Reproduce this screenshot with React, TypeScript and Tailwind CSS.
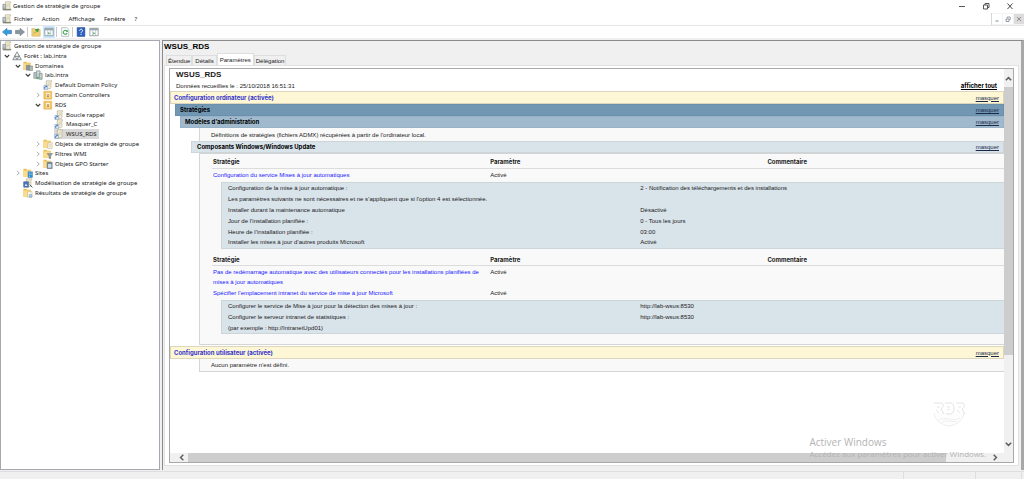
import type { ReactNode } from "react";

type IconName =
  | "console"
  | "forest"
  | "domains"
  | "domain"
  | "gpo"
  | "ou"
  | "folder"
  | "filter"
  | "starter"
  | "sites"
  | "modeling"
  | "results";

function Folder({ children }: { children?: ReactNode }) {
  return (
    <>
      <path d="M0.5 1 H4 L5 2 H9.5 V10.5 H0.5 Z" fill="#e9bf5a" />
      <path d="M0.5 3 H9.5 V10.5 H0.5 Z" fill="#fbdc8c" />
      {children}
    </>
  );
}

function Scroll() {
  return (
    <>
      <path d="M4 1 H10.5 L9.5 3 V9 L8.5 10.5 H3 L4 8.5 Z" fill="#f7f2d8" stroke="#a9a184" strokeWidth="0.7" />
      <path d="M5.5 3.5 H8.5 M5.5 5.2 H8.5 M5.5 6.9 H8" stroke="#b9b08e" strokeWidth="0.6" />
    </>
  );
}

function Icon({ name }: { name: IconName }) {
  return (
    <svg viewBox="0 0 12 12" className="size-[10px] shrink-0" aria-hidden="true">
      {name === "console" && (
        <>
          <Scroll />
          <path d="M1 4 H4.5 V10 H1 Z" fill="#a9b2b6" stroke="#7b858a" strokeWidth="0.6" />
          <path d="M1.8 5.5 H4 M1.8 7 H4" stroke="#e4eaec" strokeWidth="0.6" />
          <path d="M1 9.4 H11 V11.2 H1 Z" fill="#85887a" />
        </>
      )}
      {name === "forest" && (
        <>
          <path d="M6 1 L9 6.5 H3 Z" fill="#f4f6f6" stroke="#6b7679" strokeWidth="0.9" />
          <path d="M3.5 5.5 L6 10.5 H1 Z" fill="#e3e8e9" stroke="#6b7679" strokeWidth="0.9" />
          <path d="M8.5 5.5 L11.2 10.5 H6 Z" fill="#e3e8e9" stroke="#6b7679" strokeWidth="0.9" />
        </>
      )}
      {name === "domains" && (
        <Folder>
          <path d="M4 5 H8 V11 H4 Z" fill="#8b979c" stroke="#5f6a6e" strokeWidth="0.5" />
          <path d="M7.5 6 H11.5 V11.5 H7.5 Z" fill="#aeb8bb" stroke="#5f6a6e" strokeWidth="0.5" />
        </Folder>
      )}
      {name === "domain" && (
        <>
          <path d="M4 1 H8.5 V9 H4 Z" fill="#c9d1d3" stroke="#7c898d" strokeWidth="0.7" />
          <path d="M1 3 H4.5 V10 H1 Z" fill="#b4bfc2" stroke="#7c898d" strokeWidth="0.7" />
          <path d="M7.5 4 H11 V11.2 H7.5 Z" fill="#b5c3bd" stroke="#6d8a7a" strokeWidth="0.7" />
          <path d="M5 3 H7.5 M5 5 H7 M8.3 6 H10.2 M8.3 8 H10.2" stroke="#eef2f2" strokeWidth="0.6" />
          <path d="M4 8.5 H7 V11 H4 Z" fill="#6da27f" />
        </>
      )}
      {name === "gpo" && (
        <>
          <Scroll />
          <path d="M1 6.5 H5.5 V11.5 H1 Z" fill="#dbe6f6" stroke="#7b93b8" strokeWidth="0.6" />
          <path d="M2 10.5 V9 C2 8 3 7.8 4 7.8 M3.3 7 L4.4 7.8 L3.3 8.8" fill="none" stroke="#1f55b5" strokeWidth="0.9" />
        </>
      )}
      {name === "ou" && (
        <>
          <path d="M1 1.5 H10.5 V11 H1 Z" fill="#f3c460" stroke="#d8a850" strokeWidth="0.6" />
          <path d="M3.5 3.5 H8.5 V9 H3.5 Z" fill="#fff5d8" />
          <path d="M4.5 5 H7.5 V8.5 H4.5 Z" fill="#b8924a" />
          <path d="M5.3 5.6 H6.7 V6.6 H5.3 Z" fill="#fff" />
        </>
      )}
      {name === "folder" && (
        <Folder>
          <path d="M6 4.5 H11 V11.3 H5.5 Z" fill="#f9f6e6" stroke="#b9ab7c" strokeWidth="0.6" />
          <path d="M7 7 H9.8 M7 8.6 H9.8" stroke="#b9b08e" strokeWidth="0.6" />
        </Folder>
      )}
      {name === "filter" && (
        <Folder>
          <path d="M5 5.5 H11.5 L9.2 8.3 V11.5 H7.4 V8.3 Z" fill="#93a3ac" stroke="#5e7079" strokeWidth="0.6" />
        </Folder>
      )}
      {name === "starter" && (
        <Folder>
          <path d="M5 4 H11 V11.5 H5 Z" fill="#6f8da4" stroke="#4c667b" strokeWidth="0.6" />
          <path d="M6 6 H10 V10.5 H6 Z" fill="#cddde6" />
        </Folder>
      )}
      {name === "sites" && (
        <Folder>
          <path d="M6 4.5 H11.3 V11.4 H6 Z" fill="#2f8fd0" stroke="#1e6aa5" strokeWidth="0.5" />
          <path d="M7 6 H8.2 M9.2 6 H10.4 M7 8 H8.2 M9.2 8 H10.4 M7 10 H8.2" stroke="#d8eefb" strokeWidth="0.9" />
        </Folder>
      )}
      {name === "modeling" && (
        <>
          <Scroll />
          <path d="M0.8 4.5 H6.5 V11 H0.8 Z" fill="#4c74b8" stroke="#2f4f8c" strokeWidth="0.6" />
          <path d="M2 9.5 L3.5 6.5 L5.3 9.5 Z" fill="#e8eefb" />
          <path d="M8 8 L11.3 11.3" stroke="#44607f" strokeWidth="1.2" />
        </>
      )}
      {name === "results" && (
        <Folder>
          <path d="M5.5 4.5 H10.8 V11.3 H5.5 Z" fill="#fffdf3" stroke="#b9ab7c" strokeWidth="0.6" />
          <circle cx="9" cy="9.2" r="1.8" fill="#a9d2ee" stroke="#5c8fb5" strokeWidth="0.6" />
        </Folder>
      )}
    </svg>
  );
}

type Node = { label: string; icon: IconName; pad: string; open?: boolean; leaf?: boolean; selected?: boolean };

const tree: Node[] = [
  { label: "Forêt : lab.intra", icon: "forest", pad: "pl-px", open: true },
  { label: "Domaines", icon: "domains", pad: "pl-[12px]", open: true },
  { label: "lab.intra", icon: "domain", pad: "pl-[22px]", open: true },
  { label: "Default Domain Policy", icon: "gpo", pad: "pl-[32px]", leaf: true },
  { label: "Domain Controllers", icon: "ou", pad: "pl-[32px]" },
  { label: "RDS", icon: "ou", pad: "pl-[32px]", open: true },
  { label: "Boucle rappel", icon: "gpo", pad: "pl-[43px]", leaf: true },
  { label: "Masquer_C", icon: "gpo", pad: "pl-[43px]", leaf: true },
  { label: "WSUS_RDS", icon: "gpo", pad: "pl-[43px]", leaf: true, selected: true },
  { label: "Objets de stratégie de groupe", icon: "folder", pad: "pl-[32px]" },
  { label: "Filtres WMI", icon: "filter", pad: "pl-[32px]" },
  { label: "Objets GPO Starter", icon: "starter", pad: "pl-[32px]" },
  { label: "Sites", icon: "sites", pad: "pl-[12px]" },
  { label: "Modélisation de stratégie de groupe", icon: "modeling", pad: "pl-[12px]", leaf: true },
  { label: "Résultats de stratégie de groupe", icon: "results", pad: "pl-[12px]", leaf: true },
];

function Chevron({ open }: { open?: boolean }) {
  return (
    <svg viewBox="0 0 10 10" className="size-[10px]" aria-hidden="true">
      {open ? (
        <path d="M2.8 4 L5 6.2 L7.2 4" fill="none" stroke="#404040" strokeWidth="1.1" />
      ) : (
        <path d="M4 2.8 L6.2 5 L4 7.2" fill="none" stroke="#a0a0a0" strokeWidth="0.9" />
      )}
    </svg>
  );
}

function Tree() {
  return (
    <nav aria-label="Arborescence" className="w-[160px] shrink-0 border border-[#a5a8b0] bg-white">
      <ul className="grid h-[157px] auto-rows-fr whitespace-nowrap">
        <li className="flex items-center gap-[2px] pl-px">
          <Icon name="console" />
          <span>Gestion de stratégie de groupe</span>
        </li>
        {tree.map((n) => (
          <li key={n.label} className={`flex items-center ${n.pad}`}>
            <span className="w-[10px] shrink-0">
              {!n.leaf && (
                <button type="button" aria-label={`Développer ${n.label}`} className="block">
                  <Chevron open={n.open} />
                </button>
              )}
            </span>
            <span className={`flex items-center gap-[2px] self-stretch ${n.selected ? "bg-[#d9d9d9] pr-[2px]" : ""}`}>
              <Icon name={n.icon} />
              {n.label}
            </span>
          </li>
        ))}
      </ul>
    </nav>
  );
}

function ToolIcon({ label, active, children }: { label: string; active?: boolean; children: ReactNode }) {
  return (
    <button
      type="button"
      aria-label={label}
      className={`flex h-[12px] w-[12px] items-center justify-center ${active ? "bg-[#cce8ff]" : ""}`}
    >
      <svg viewBox="0 0 12 12" className="size-[10px]" aria-hidden="true">
        {children}
      </svg>
    </button>
  );
}

function Pane() {
  return (
    <>
      <path d="M1 1.5 H11 V10.5 H1 Z" fill="#fff" stroke="#7d8a93" strokeWidth="0.9" />
      <path d="M1 1.5 H11 V4 H1 Z" fill="#9aa6ae" />
      <path d="M4.5 4 V10.5 M8 4 V10.5" stroke="#9aa6ae" strokeWidth="0.7" />
      <path d="M5.2 6 L7.4 7.5 L5.2 9 Z" fill="#3fa257" />
    </>
  );
}

function Divider() {
  return <span className="mr-px h-[10px] w-px bg-[#c9c9c9]" />;
}

function Chrome() {
  return (
    <header className="shrink-0 bg-white">
      <div className="flex h-[12px] items-center justify-between pr-[9px] pl-[2px]">
        <h1 className="flex items-center gap-px">
          <Icon name="console" />
          Gestion de stratégie de groupe
        </h1>
        <div className="flex gap-[14px]">
          <button type="button" aria-label="Réduire">
            <svg viewBox="0 0 10 10" className="size-[10px]"><path d="M2 5.5 H8" stroke="#444" strokeWidth="0.9" /></svg>
          </button>
          <button type="button" aria-label="Restaurer">
            <svg viewBox="0 0 10 10" className="size-[10px]">
              <path d="M2.5 4 H6.5 V8 H2.5 Z M4 4 V2.5 H8 V6.5 H6.5" fill="none" stroke="#444" strokeWidth="0.9" />
            </svg>
          </button>
          <button type="button" aria-label="Fermer">
            <svg viewBox="0 0 10 10" className="size-[10px]"><path d="M2.5 2.5 L7.5 8 M7.5 2.5 L2.5 8" stroke="#333" strokeWidth="0.9" /></svg>
          </button>
        </div>
      </div>
      <div className="flex h-[13px] items-center justify-between pl-[2px]">
        <div className="flex items-center gap-[9px]">
          <button type="button" className="flex items-center gap-[2px]">
            <Icon name="console" />
            Fichier
          </button>
          <button type="button">Action</button>
          <button type="button">Affichage</button>
          <button type="button">Fenêtre</button>
          <button type="button">?</button>
        </div>
        <div className="flex h-[12px] items-center gap-[1px] border-l border-[#d8d8d8] bg-[#f3f3f3]">
          <button type="button" aria-label="Réduire la fenêtre" className="bg-white">
            <svg viewBox="0 0 10 10" className="size-[10px]"><path d="M3.5 7 H6.5" stroke="#7c8594" /></svg>
          </button>
          <button type="button" aria-label="Restaurer la fenêtre" className="bg-white">
            <svg viewBox="0 0 10 10" className="size-[10px]">
              <path d="M3 5 H6 V7.5 H3 Z M4.2 4.5 V3 H7.2 V5.6 H6.2" fill="none" stroke="#7c8594" strokeWidth="0.8" />
            </svg>
          </button>
          <button type="button" aria-label="Fermer la fenêtre" className="bg-[#dcdcdc]">
            <svg viewBox="0 0 10 10" className="size-[10px]"><path d="M3 3 L7 7 M7 3 L3 7" stroke="#8f8f8f" /></svg>
          </button>
        </div>
      </div>
      <div className="flex h-[13px] items-center gap-px border-t border-[#e6e6e6] pl-[1px]">
        <ToolIcon label="Précédent">
          <path d="M0.5 6 L6 1.5 V4 H11.5 V8 H6 V10.5 Z" fill="#3d9bdc" stroke="#2276b8" strokeWidth="0.6" />
        </ToolIcon>
        <ToolIcon label="Suivant">
          <path d="M11.5 6 L6 1.5 V4 H0.5 V8 H6 V10.5 Z" fill="#8a969e" stroke="#6d7980" strokeWidth="0.6" />
        </ToolIcon>
        <Divider />
        <ToolIcon label="Dossier parent">
          <path d="M1 2 H5 L6 3 H11 V11 H1 Z" fill="#f3cf74" stroke="#c9a85a" strokeWidth="0.6" />
          <path d="M3.5 8 L6.5 5 M5 3.2 L9 2.2 L8.2 6 Z" fill="#2f9a43" stroke="#2f9a43" strokeWidth="0.8" />
        </ToolIcon>
        <ToolIcon label="Afficher l’arborescence" active>
          <Pane />
        </ToolIcon>
        <Divider />
        <ToolIcon label="Actualiser">
          <path d="M2 0.8 H8.5 L10.5 2.8 V11.2 H2 Z" fill="#fff" stroke="#9aa3a8" strokeWidth="0.8" />
          <path d="M8.2 4.8 A2.4 2.4 0 1 0 8.6 7.2" fill="none" stroke="#3ba94f" strokeWidth="1.3" />
          <path d="M9.4 3.4 V6 H6.8 Z" fill="#3ba94f" />
        </ToolIcon>
        <Divider />
        <ToolIcon label="Aide">
          <path d="M1.5 0.8 H10.5 V11.2 H1.5 Z" fill="#2d62c4" stroke="#173f8d" strokeWidth="0.8" />
          <path d="M4.4 4.4 C4.4 2 8 2.2 7.8 4.4 C7.7 5.6 6.1 5.8 6.1 7.4 M6.1 8.4 V9.6" fill="none" stroke="#fff" strokeWidth="1.2" />
        </ToolIcon>
        <ToolIcon label="Volet Actions">
          <Pane />
        </ToolIcon>
      </div>
    </header>
  );
}

function Toggle() {
  return (
    <a href="#masquer" className="font-['Liberation_Sans',sans-serif] font-normal text-[#1c2a4a] underline">
      masquer
    </a>
  );
}

const bar = "flex items-center justify-between border pr-[4px] font-['Inter',sans-serif] font-bold";
const head = "border-b border-[#dcdcdc] p-0 px-px font-['Inter',sans-serif]";

function PolicyHead() {
  return (
    <tr className="h-[11px] text-left">
      <th className={`${head} w-[35%]`}>Stratégie</th>
      <th className={`${head} w-[35%]`}>Paramètre</th>
      <th className={head}>Commentaire</th>
    </tr>
  );
}

function PolicyRow({ name }: { name: string }) {
  return (
    <tr className="align-top">
      <td className="p-0 pt-px pl-px">
        <a href="#strategie" className="text-[#1a1aff]">
          {name}
        </a>
      </td>
      <td className="px-px pt-px">Activé</td>
      <td />
    </tr>
  );
}

function Details({ rows }: { rows: [string, string][] }) {
  return (
    <tr>
      <td colSpan={3} className="p-0 pt-[2px] pl-[9px]">
        <table className="w-full table-fixed border border-r-0 border-[#cdd5d9] bg-[#d9e3ea]">
          <tbody>
            {rows.map(([k, v]) => (
              <tr key={k} className="h-[11px]">
                {v ? (
                  <>
                    <td className="w-[53%] p-0 pl-[6px]">{k}</td>
                    <td className="p-0 pl-[4px]">{v}</td>
                  </>
                ) : (
                  <td colSpan={2} className="p-0 pl-[6px]">
                    {k}
                  </td>
                )}
              </tr>
            ))}
          </tbody>
        </table>
      </td>
    </tr>
  );
}

function Report() {
  return (
    <div className="min-w-0 grow text-[#1a1a1a]">
      <div className="flex items-end justify-between pr-[7px] pl-[6px]">
        <div>
          <h3 className="pt-px text-[8px] font-bold">WSUS_RDS</h3>
          <p className="pt-px">Données recueillies le : 25/10/2018 16:51:31</p>
        </div>
        <a href="#tout" className="font-['Inter',sans-serif] font-bold text-black underline">
          afficher tout
        </a>
      </div>
      <div className={`${bar} h-[13px] border-[#dcd6bd] bg-[#fef7d6] pl-[3px] text-[#3333cc]`}>
        <h4>Configuration ordinateur (activée)</h4>
        <Toggle />
      </div>
      <div className={`${bar} ml-[5px] h-[12px] border-[#6a90ae] bg-[#7197b3] pl-[4px] text-black`}>
        <h4>Stratégies</h4>
        <Toggle />
      </div>
      <div className={`${bar} ml-[10px] h-[12px] border-[#98b2c7] bg-[#a1b9cc] pl-[4px] text-black`}>
        <h4>Modèles d’administration</h4>
        <Toggle />
      </div>
      <p className="ml-[29px] flex h-[13px] items-center border-l border-[#d5d5d5] bg-[#f9f9f9] pl-[11px]">
        Définitions de stratégies (fichiers ADMX) récupérées à partir de l’ordinateur local.
      </p>
      <div className={`${bar} ml-[21px] h-[12px] border-[#cdd5d9] bg-[#d9e3ea] pl-[5px] text-black`}>
        <h4>Composants Windows/Windows Update</h4>
        <Toggle />
      </div>
      <div className="mb-px ml-[29px] border border-r-0 border-[#d5d5d5] bg-[#f9f9f9] pt-[3px] pb-[10px] pl-[12px]">
        <table className="w-full table-fixed">
          <tbody>
            <PolicyHead />
            <PolicyRow name="Configuration du service Mises à jour automatiques" />
            <Details
              rows={[
                ["Configuration de la mise à jour automatique :", "2 - Notification des téléchargements et des installations"],
                ["Les paramètres suivants ne sont nécessaires et ne s’appliquent que si l’option 4 est sélectionnée.", ""],
                ["Installer durant la maintenance automatique", "Désactivé"],
                ["Jour de l’installation planifiée :", "0 - Tous les jours"],
                ["Heure de l’installation planifiée :", "03:00"],
                ["Installer les mises à jour d’autres produits Microsoft", "Activé"],
              ]}
            />
          </tbody>
        </table>
        <table className="mt-[6px] w-full table-fixed">
          <tbody>
            <PolicyHead />
            <PolicyRow name="Pas de redémarrage automatique avec des utilisateurs connectés pour les installations planifiées de mises à jour automatiques" />
            <PolicyRow name="Spécifier l’emplacement intranet du service de mise à jour Microsoft" />
            <Details
              rows={[
                ["Configurer le service de Mise à jour pour la détection des mises à jour :", "http://lab-wsus:8530"],
                ["Configurer le serveur intranet de statistiques :", "http://lab-wsus:8530"],
                ["(par exemple : http://IntranetUpd01)", ""],
              ]}
            />
          </tbody>
        </table>
      </div>
      <div className={`${bar} h-[13px] border-[#dcd6bd] bg-[#fef7d6] pl-[3px] text-[#3333cc]`}>
        <h4>Configuration utilisateur (activée)</h4>
        <Toggle />
      </div>
      <p className="ml-[29px] flex h-[13px] items-center border-b border-l border-[#d5d5d5] bg-[#f9f9f9] pl-[11px]">
        Aucun paramètre n’est défini.
      </p>
    </div>
  );
}

function Arrow({ d, label, className }: { d: string; label: string; className: string }) {
  return (
    <button type="button" aria-label={label} className={`flex items-center justify-center ${className}`}>
      <svg viewBox="0 0 10 10" className="size-[9px]">
        <path d={d} fill="none" stroke="#606060" strokeWidth="1.7" />
      </svg>
    </button>
  );
}

export default function App() {
  return (
    <div className="flex h-screen flex-col overflow-hidden bg-[#f0f0f0] font-['Noto_Sans','Open_Sans',sans-serif] text-[6px] leading-[10px] text-[#1a1a1a]">
      <Chrome />
      <main className="flex min-h-0 grow gap-[2px] pt-[2px]">
        <Tree />
        <section className="flex min-w-0 grow flex-col border-t border-r-[3px] border-l border-t-[#8a8a8a] border-r-[#a8a8a8] border-l-[#8a8a8a] pr-[2px] pb-[4px] pl-px font-['Liberation_Sans',sans-serif]">
          <h2 className="h-[12px] shrink-0 pt-px text-[8px] font-bold text-black">WSUS_RDS</h2>
          <div role="tablist" className="flex shrink-0 items-end pl-[2px]">
            <button type="button" role="tab" className="h-[10px] border border-b-0 border-[#dedede] px-px">Étendue</button>
            <button type="button" role="tab" className="h-[10px] border border-b-0 border-[#dedede] px-[2px]">Détails</button>
            <button type="button" role="tab" aria-selected="true" className="h-[12px] border border-b-0 border-[#dedede] bg-white px-[2px]">
              Paramètres
            </button>
            <button type="button" role="tab" className="h-[10px] border border-b-0 border-[#dedede] px-px">Délégation</button>
          </div>
          <div className="flex min-h-0 grow flex-col border border-[#e2e2e2] bg-white px-[4px] py-[2px]">
            <div className="relative flex min-h-0 grow flex-col border border-[#a8a8a8]">
              <div className="flex min-h-0 grow">
                <Report />
                <div className="flex w-[9px] shrink-0 flex-col bg-[#f0f0f0]">
                  <Arrow label="Défiler vers le haut" d="M2 7 L5 4 L8 7" className="h-[18px]" />
                  <div className="grow-[268] bg-[#cdcdcd]" />
                  <div className="grow-[80]" />
                  <Arrow label="Défiler vers le bas" d="M2 3 L5 6 L8 3" className="h-[18px]" />
                </div>
              </div>
              <div className="flex h-[9px] shrink-0 bg-[#f0f0f0] pr-[9px]">
                <Arrow label="Défiler vers la gauche" d="M7 2 L4 5 L7 8" className="w-[18px] pl-[4px]" />
                <div className="grow-[760] bg-[#cdcdcd]" />
                <div className="grow-[40]" />
                <Arrow label="Défiler vers la droite" d="M3 2 L6 5 L3 8" className="w-[18px]" />
              </div>
              <svg viewBox="0 0 34 26" className="absolute right-[47px] bottom-[35px] h-[26px] w-[34px]" aria-hidden="true">
                <path d="M2 12 C3 19 9 24 17 25 C25 24 31 19 32 12" fill="#fdfdfd" stroke="#ebebeb" strokeWidth="0.9" />
                <path d="M7 19 C12 15 22 21 28 17 M10 21 C15 18 20 22 25 20" fill="none" stroke="#ebebeb" strokeWidth="0.8" />
                <path d="M2 2 H9 C12 2 12 6 9 8 L12 13 M13 2 H19 C23 2 23 12 19 13 H14 M24 2 H30 C33 2 33 6 30 8 L33 13" fill="none" stroke="#e3e3e3" strokeWidth="1" />
                <path d="M5 6 H8 M15 6 H18 M26 6 H29 M4 9 L7 12 M15 9 L18 8 M25 9 L28 12" stroke="#e3e3e3" strokeWidth="0.9" />
              </svg>
              <div className="absolute right-[27px] bottom-[2px] font-['Open_Sans',sans-serif] whitespace-nowrap text-[#b4b4b4]">
                <p className="text-[10px] leading-[12px]">Activer Windows</p>
                <p className="text-[8px] leading-[12px]">Accédez aux paramètres pour activer Windows.</p>
              </div>
            </div>
          </div>
        </section>
      </main>
      <footer className="mt-px flex h-[8px] shrink-0 justify-end border-t border-[#dedede]">
        <span className="w-[72px] border-l border-[#dedede]" />
        <span className="w-[46px] border-l border-[#dedede]" />
        <span className="w-[3px] border-l border-[#dedede]" />
      </footer>
    </div>
  );
}
